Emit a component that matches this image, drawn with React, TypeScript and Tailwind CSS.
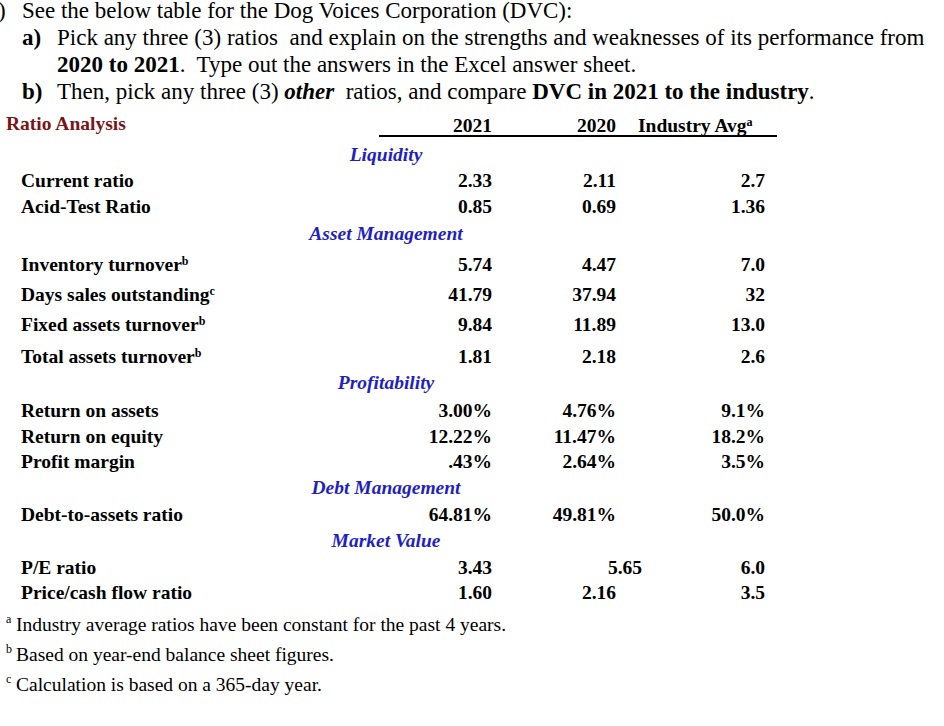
import React from "react";

type Row =
  | { kind: "cat"; text: string; cls: string }
  | { kind: "row"; label: string; sup?: string; v: [string, string, string]; cls: string; shift?: boolean };

const rows: Row[] = [
  { kind: "cat", text: "Liquidity", cls: "mt-[5px] h-[26px]" },
  { kind: "row", label: "Current ratio", v: ["2.33", "2.11", "2.7"], cls: "h-[26px]" },
  { kind: "row", label: "Acid-Test Ratio", v: ["0.85", "0.69", "1.36"], cls: "h-[26px]" },
  { kind: "cat", text: "Asset Management", cls: "mt-[1px] h-[26px]" },
  { kind: "row", label: "Inventory turnover", sup: "b", v: ["5.74", "4.47", "7.0"], cls: "mt-[5px] h-[26px]" },
  { kind: "row", label: "Days sales outstanding", sup: "c", v: ["41.79", "37.94", "32"], cls: "mt-[4px] h-[26px]" },
  { kind: "row", label: "Fixed assets turnover", sup: "b", v: ["9.84", "11.89", "13.0"], cls: "mt-[4px] h-[26px]" },
  { kind: "row", label: "Total assets turnover", sup: "b", v: ["1.81", "2.18", "2.6"], cls: "mt-[6px] h-[26px]" },
  { kind: "cat", text: "Profitability", cls: "h-[26px]" },
  { kind: "row", label: "Return on assets", v: ["3.00%", "4.76%", "9.1%"], cls: "mt-[2px] h-[26px]" },
  { kind: "row", label: "Return on equity", v: ["12.22%", "11.47%", "18.2%"], cls: "h-[25px]" },
  { kind: "row", label: "Profit margin", v: [".43%", "2.64%", "3.5%"], cls: "h-[26px]" },
  { kind: "cat", text: "Debt Management", cls: "h-[26px]" },
  { kind: "row", label: "Debt-to-assets ratio", v: ["64.81%", "49.81%", "50.0%"], cls: "mt-[1px] h-[26px]" },
  { kind: "cat", text: "Market Value", cls: "h-[26px]" },
  { kind: "row", label: "P/E ratio", v: ["3.43", "5.65", "6.0"], cls: "mt-[1px] h-[25px]", shift: true },
  { kind: "row", label: "Price/cash flow ratio", v: ["1.60", "2.16", "3.5"], cls: "h-[26px]" },
];

const notes = [
  { mark: "a", text: "Industry average ratios have been constant for the past 4 years.", cls: "mt-[6px]" },
  { mark: "b", text: "Based on year-end balance sheet figures.", cls: "mt-[4px]" },
  { mark: "c", text: "Calculation is based on a 365-day year.", cls: "mt-[4px]" },
];

export default function App() {
  return (
    <div className="w-[944px] h-[726px] overflow-hidden bg-white text-black font-['Liberation_Serif','Times_New_Roman',serif]">
      {/* question text */}
      <div className="-mt-[3px] text-[23px] leading-[27px] whitespace-pre">
        <div className="flex">
          <span className="-ml-[2px] w-[24px]">)</span>
          <span>See the below table for the Dog Voices Corporation (DVC):</span>
        </div>
        <div className="flex pl-[22px]">
          <span className="w-[35px] font-bold">a)</span>
          <span>Pick any three (3) ratios  and explain on the strengths and weaknesses of its performance from</span>
        </div>
        <div className="pl-[57px]">
          <b>2020 to 2021</b>.  Type out the answers in the Excel answer sheet.
        </div>
        <div className="flex pl-[22px]">
          <span className="w-[35px] font-bold">b)</span>
          <span>
            Then, pick any three (3) <b><i>other</i></b>  ratios, and compare <b>DVC in 2021 to the industry</b>.
          </span>
        </div>
      </div>

      {/* table */}
      <div className="mt-[6px] text-[19.5px] font-bold">
        <div className="flex h-[26px]">
          <div className="w-[379px] pl-[6px] pb-[4px] flex items-end leading-none text-[#7a1517]">Ratio Analysis</div>
          <div className="w-[398px] border-b-2 border-black flex items-end leading-none">
            <span className="w-[113px] text-right">2021</span>
            <span className="w-[124px] text-right">2020</span>
            <span className="pl-[22px]">
              Industry Avg<sup className="text-[12px]">a</sup>
            </span>
          </div>
        </div>

        {rows.map((r, i) =>
          r.kind === "cat" ? (
            <div key={i} className={`flex items-center justify-center w-[772px] italic text-[#1f1fc4] ${r.cls}`}>
              {r.text}
            </div>
          ) : (
            <div key={i} className={`flex items-center pl-[21px] whitespace-nowrap ${r.cls}`}>
              <span className="w-[351px]">
                {r.label}
                {r.sup && <sup className="text-[12px]">{r.sup}</sup>}
              </span>
              <span className="w-[120px] text-right">{r.v[0]}</span>
              <span className={r.shift ? "w-[150px] text-right" : "w-[124px] text-right"}>{r.v[1]}</span>
              <span className={r.shift ? "w-[123px] text-right" : "w-[149px] text-right"}>{r.v[2]}</span>
            </div>
          )
        )}
      </div>

      {/* footnotes */}
      <div className="text-[19.5px]">
        {notes.map((n) => (
          <div key={n.mark} className={`flex items-center h-[26px] pl-[6px] whitespace-nowrap ${n.cls}`}>
            <sup className="w-[10px] text-[12px]">{n.mark}</sup>
            <span>{n.text}</span>
          </div>
        ))}
      </div>
    </div>
  );
}
